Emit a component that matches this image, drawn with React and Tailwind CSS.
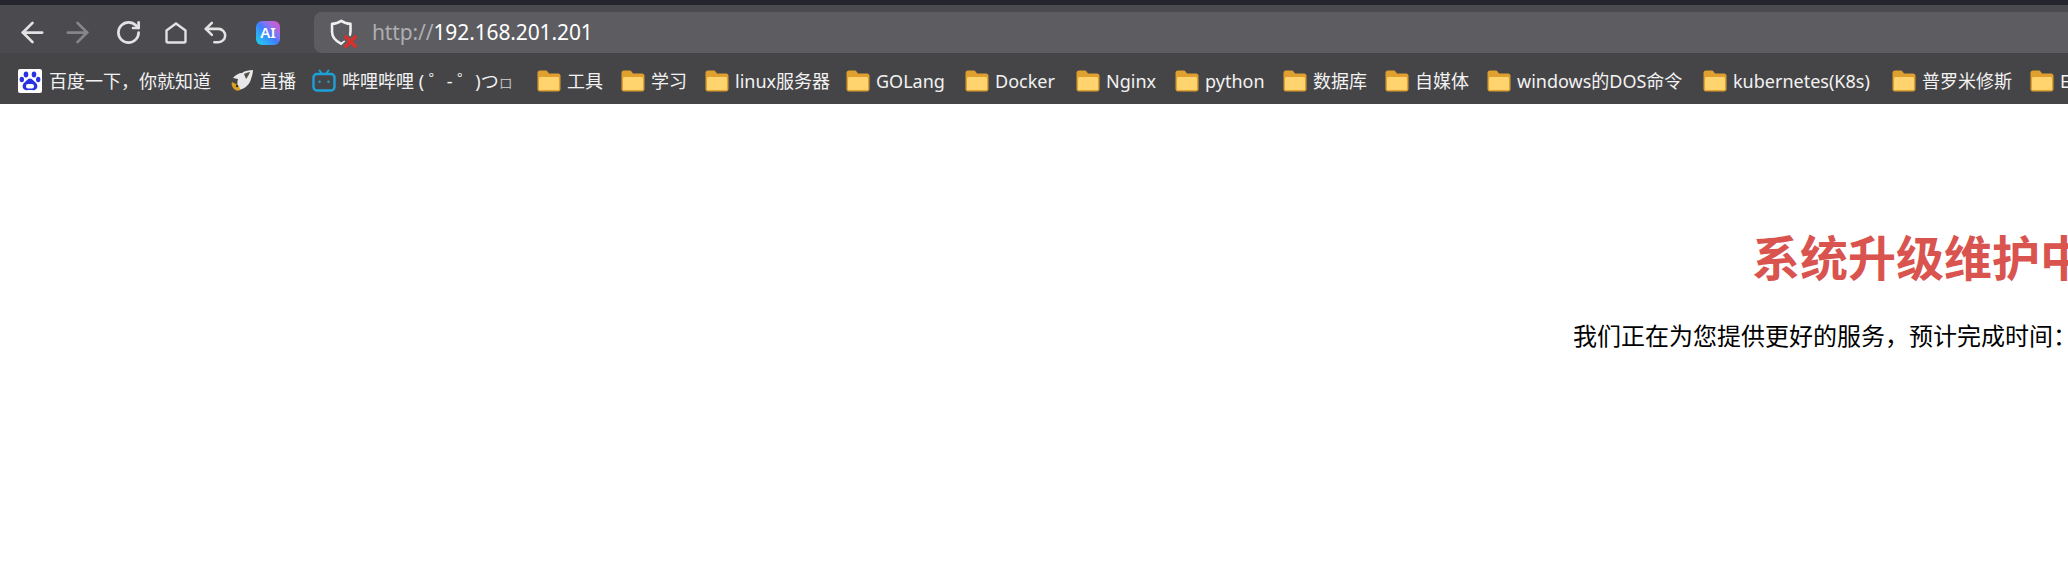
import { ArrowLeft, ArrowRight, RotateCw, Undo2 } from 'lucide-react';

const BaiduIcon = () => (
    <svg width="24" height="24" viewBox="0 0 24 24" className="shrink-0">
        <rect width="24" height="24" rx="2" fill="#ffffff" />
        <g fill="#2932e1">
            <ellipse cx="8" cy="5.500" rx="2.300" ry="3" />
            <ellipse cx="16" cy="5.500" rx="2.300" ry="3" />
            <ellipse cx="3.800" cy="10.500" rx="2.200" ry="2.800" />
            <ellipse cx="20.200" cy="10.500" rx="2.200" ry="2.800" />
            <path d="M12 9.500c-2.500 0-3.500 2.500-5.500 4-2.200 1.700-2.500 5-.5 6.800 1.800 1.500 3.500.7 6 .7s4.200.8 6-.7c2-1.800 1.700-5.100-.5-6.800-2-1.500-3-4-5.500-4z" />
        </g>
        <rect x="8" y="15" width="8" height="4.500" rx="2" fill="#ffffff" />
    </svg>
);

const LiveIcon = () => (
    <svg width="24" height="24" viewBox="0 0 24 24" className="shrink-0">
        <path d="M23 1c-4 .5-8 .5-11 3-3 0-7 2-9 5l5 1c-1 3-1 7 1 11l3-1c5-2 8-6 9-10 1-3 2-6 2-9z" fill="#e8e8e8" />
        <path d="M2 13c-1 2 0 5 2 7s4 2 6 1c0-2-1-4-2-5z" fill="#d9a021" />
        <path d="M14 5c2-1 4-2 6-2-1 2-2 5-4 7z" fill="#55504a" />
        <circle cx="7" cy="17" r="1.200" fill="#2f2f2f" />
    </svg>
);

const BiliIcon = () => (
    <svg width="24" height="24" viewBox="0 0 24 24" fill="none" className="shrink-0">
        <path d="M7.500 1.500 10 5M16.500 1.500 14 5" stroke="#1ea0d8" strokeWidth="2" strokeLinecap="round" />
        <rect x="1.500" y="5" width="21" height="16.500" rx="3.500" stroke="#1ea0d8" strokeWidth="2.400" />
        <rect x="6.500" y="11.500" width="2.200" height="2.600" rx="1" fill="#1ea0d8" />
        <rect x="15.300" y="11.500" width="2.200" height="2.600" rx="1" fill="#1ea0d8" />
    </svg>
);

const FolderIcon = () => (
    <svg width="24" height="22" viewBox="0 0 24 22" className="shrink-0">
        <path d="M0.500 3c0-1.400 1-2.500 2.500-2.500h5.500c1 0 1.600.5 2.200 1.200L12 3.500h9c1.500 0 2.500 1 2.500 2.500v13c0 1.500-1 2.500-2.500 2.500H3c-1.500 0-2.500-1-2.500-2.500z" fill="#e0a030" />
        <path d="M2 8.500c0-.8.600-1.500 1.500-1.500h17c.9 0 1.500.7 1.500 1.500V19c0 .6-.5 1-1 1H3c-.5 0-1-.4-1-1z" fill="#ffd36e" />
    </svg>
);

const ShieldIcon = () => (
    <svg width="30" height="30" viewBox="0 0 26 26" fill="none" className="shrink-0">
        <path d="M11.500 2.500c2.500 1.800 5 2.500 8 2.500v7c0 4-3 8-8 10.500C6.500 20 3.500 16 3.500 12V5c3 0 5.500-.7 8-2.500z" stroke="#f0f0f0" strokeWidth="2.200" strokeLinejoin="round" />
        <path d="M13.500 14.500 25 26M25 14.500 13.500 26" stroke="#5c5c61" strokeWidth="6" />
        <path d="M14.500 15.500 24.500 25.500M24.500 15.500 14.500 25.500" stroke="#d9302c" strokeWidth="3" />
    </svg>
);

const HomeIcon = () => (
    <svg width="24" height="24" viewBox="0 0 24 24" fill="none" stroke="#e2e2e2" strokeWidth="2.400" strokeLinejoin="round" className="shrink-0">
        <path d="M12 2.500 21.500 9.500V20c0 1-.6 1.500-1.500 1.500H4c-.9 0-1.500-.5-1.500-1.500V9.500z" />
    </svg>
);

const AiIcon = () => (
    <div className="flex h-6 w-6 shrink-0 items-center justify-center rounded-[6px] bg-gradient-to-bl from-[#e83fc8] via-[#3f7bff] to-[#12d8e8] text-[15px] font-semibold text-white">
        AI
    </div>
);

const bookmarks = [
    { name: '工具', width: 'w-[84px]' },
    { name: '学习', width: 'w-[84px]' },
    { name: 'linux服务器', width: 'w-[141px]' },
    { name: 'GOLang', width: 'w-[119px]' },
    { name: 'Docker', width: 'w-[111px]' },
    { name: 'Nginx', width: 'w-[99px]' },
    { name: 'python', width: 'w-[108px]' },
    { name: '数据库', width: 'w-[102px]' },
    { name: '自媒体', width: 'w-[102px]' },
    { name: 'windows的DOS命令', width: 'w-[216px]' },
    { name: 'kubernetes(K8s)', width: 'w-[189px]' },
    { name: '普罗米修斯', width: 'w-[138px]' },
    { name: 'E', width: 'w-[40px]' },
];

export default function App() {
    return (
        <div className="h-[580px] w-[2068px] overflow-hidden bg-white font-['Noto_Sans','Noto_Sans_CJK_SC',sans-serif]">
            <div className="h-[5px] bg-[#25252e]" />

            {/* Toolbar */}
            <div className="flex h-[48px] items-end bg-[#4a4a4f]">
                <div className="flex h-[41px] w-[314px] shrink-0 items-center pl-[16px]">
                    <ArrowLeft size={33} color="#e2e2e2" strokeWidth={2} className="shrink-0" />
                    <ArrowRight size={33} color="#85858a" strokeWidth={2} className="ml-[12px] shrink-0" />
                    <RotateCw size={27} color="#e2e2e2" strokeWidth={2.4} className="ml-[21px] shrink-0" />
                    <div className="ml-[22px]">
                        <HomeIcon />
                    </div>
                    <Undo2 size={29} color="#e2e2e2" strokeWidth={2.1} className="ml-[13px] shrink-0" />
                    <div className="ml-[26px]">
                        <AiIcon />
                    </div>
                </div>
                <div className="flex h-[41px] flex-1 items-center rounded-tl-[8px] rounded-bl-[8px] bg-[#5c5c61] pl-[14px]">
                    <ShieldIcon />
                    <div className="ml-[14px] text-[21px] leading-none tracking-[-0.12px] whitespace-nowrap text-white">
                        <span className="text-[#aeaeb2]">http://</span>192.168.201.201
                    </div>
                </div>
            </div>

            {/* Bookmarks bar */}
            <div className="flex h-[51px] items-center overflow-hidden bg-[#454548] pt-[5px] pl-[18px] text-[18px] whitespace-nowrap text-[#f2f2f2]">
                <div className="flex w-[212px] shrink-0 items-center gap-[7px]">
                    <BaiduIcon />
                    <span>百度一下，你就知道</span>
                </div>
                <div className="flex w-[82px] shrink-0 items-center gap-[6px]">
                    <LiveIcon />
                    <span>直播</span>
                </div>
                <div className="flex w-[225px] shrink-0 items-center gap-[6px]">
                    <BiliIcon />
                    <span>
                        哔哩哔哩 ( ゜- ゜)つ<span className="text-[14px] text-[#bdbdbd]">ロ</span>
                    </span>
                </div>
                {bookmarks.map((item) => (
                    <div key={item.name} className={`flex shrink-0 items-center gap-[6px] ${item.width}`}>
                        <FolderIcon />
                        <span>{item.name}</span>
                    </div>
                ))}
            </div>

            {/* Page */}
            <div className="flex flex-col pt-[118px] whitespace-nowrap">
                <h1 className="pl-[1752px] text-[48px] leading-[72px] font-bold text-[#d9534f]">系统升级维护中</h1>
                <p className="mt-[24px] pl-[1573px] text-[24px] leading-[36px] text-black">我们正在为您提供更好的服务，预计完成时间：</p>
            </div>
        </div>
    );
}
